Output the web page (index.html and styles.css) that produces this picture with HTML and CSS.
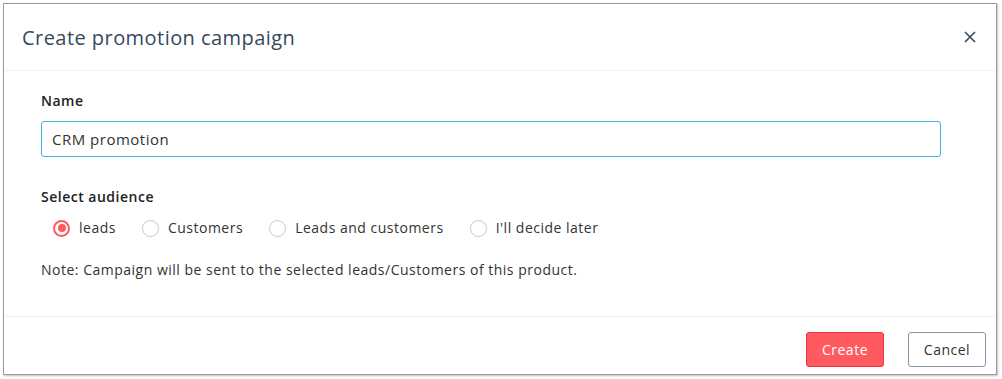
FILE: index.html
```html
<!DOCTYPE html>
<html lang="en">
<head>
    <meta charset="UTF-8">
    <meta name="viewport" content="width=device-width, initial-scale=1.0">
    <title>Create promotion campaign</title>
    <link rel="stylesheet" href="styles.css">
</head>
<body>
    <div class="modal">
        <div class="modal-header">
            <h1 class="modal-title">Create promotion campaign</h1>
            <button class="close" type="button" aria-label="Close">
                <svg width="12" height="12" viewBox="0 0 12 12">
                    <path d="M1 1L11 11M11 1L1 11" stroke="#34495e" stroke-width="1.6" fill="none"/>
                </svg>
            </button>
        </div>

        <div class="modal-body">
            <label class="field-label" for="campaignName">Name</label>
            <input class="text-input" id="campaignName" type="text" value="CRM promotion">

            <div class="field-label audience-label">Select audience</div>
            <div class="radio-group">
                <label class="radio checked"><span class="dot"></span>leads</label>
                <label class="radio"><span class="dot"></span>Customers</label>
                <label class="radio"><span class="dot"></span>Leads and customers</label>
                <label class="radio"><span class="dot"></span>I'll decide later</label>
            </div>

            <p class="note">Note: Campaign will be sent to the selected leads/Customers of this product.</p>
        </div>

        <div class="modal-footer">
            <button class="btn btn-primary" type="button">Create</button>
            <button class="btn btn-default" type="button">Cancel</button>
        </div>
    </div>
</body>
</html>
```

FILE: styles.css
```css
body {
    margin: 0;
    padding: 3px;
    font-family: "Open Sans", "Noto Sans", sans-serif;
    color: #333;
    background: #fff;
}
.modal {
    width: 992px;
    height: 370px;
    border: 1px solid #9a9a9a;
    box-shadow: 1px 1px 2px rgba(0, 0, 0, 0.25);
    display: flex;
    flex-direction: column;
    background: #fff;
}
.modal-header {
    height: 66px;
    display: flex;
    align-items: center;
    justify-content: space-between;
    padding: 0 20px 0 18px;
    border-bottom: 1px solid #edf2f6;
}
.modal-title {
    margin: 0;
    font-size: 20px;
    font-weight: 400;
    letter-spacing: 0.45px;
    color: #34495e;
}
.close {
    border: none;
    background: none;
    padding: 0;
    cursor: pointer;
    display: flex;
}
.modal-body {
    flex: 1;
    padding: 21px 55px 0 37px;
}
.field-label {
    display: block;
    font-size: 14px;
    font-weight: 600;
    letter-spacing: 0.5px;
    color: #222;
    line-height: 18px;
}
.text-input {
    display: block;
    box-sizing: border-box;
    width: 900px;
    height: 36px;
    margin-top: 11px;
    padding: 0 10px;
    border: 1px solid #3bb5e6;
    border-radius: 3px;
    font-family: inherit;
    font-size: 15px;
    letter-spacing: 0.5px;
    color: #333;
    outline: none;
}
.audience-label {
    margin-top: 31px;
}
.radio-group {
    display: flex;
    gap: 26px;
    margin-top: 12px;
    padding-left: 12px;
}
.radio {
    display: flex;
    align-items: center;
    gap: 9px;
    font-size: 14px;
    letter-spacing: 0.5px;
    color: #333;
    line-height: 20px;
    cursor: pointer;
}
.dot {
    width: 17px;
    height: 17px;
    border: 1.5px solid #cacaca;
    border-radius: 50%;
    box-sizing: border-box;
    position: relative;
}
.radio.checked .dot {
    border-color: #ff5a5f;
    border-width: 2px;
}
.radio.checked .dot::after {
    content: "";
    position: absolute;
    left: 2.5px;
    top: 2.5px;
    width: 8px;
    height: 8px;
    border-radius: 50%;
    background: #ff5a5f;
}
.note {
    margin: 22px 0 0;
    font-size: 14px;
    letter-spacing: 0.5px;
    color: #333;
}
.modal-footer {
    height: 58px;
    border-top: 1px solid #efefef;
    display: flex;
    justify-content: flex-end;
    align-items: flex-start;
    gap: 24px;
    padding: 15px 10px 0 0;
    box-sizing: border-box;
}
.btn {
    width: 78px;
    height: 35px;
    border-radius: 3px;
    font-family: inherit;
    font-size: 14px;
    letter-spacing: 0.5px;
    cursor: pointer;
}
.btn-primary {
    background: #ff5a5f;
    border: 1px solid #f0303a;
    color: #fff;
}
.btn-default {
    background: #fff;
    border: 1px solid #8596a8;
    color: #333;
}
```
